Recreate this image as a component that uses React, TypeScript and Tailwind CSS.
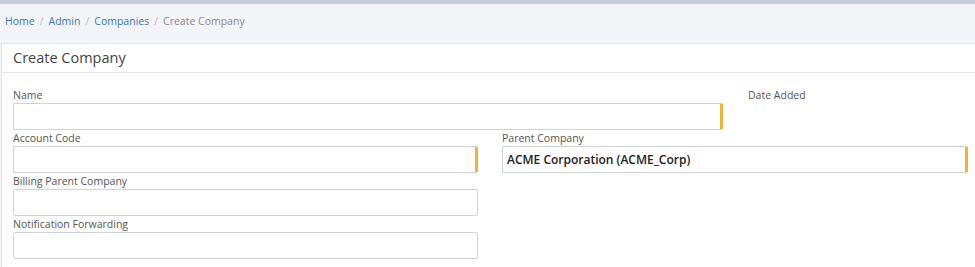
import React from "react";

const font = { fontFamily: '"Open Sans", "Noto Sans", sans-serif' };

function Field({
  label,
  value,
  required,
  className,
}: {
  label: string;
  value?: string;
  required?: boolean;
  className?: string;
}) {
  return (
    <div className={className}>
      <div className="h-[16px] text-[10.5px] leading-[16px] text-[#555]">{label}</div>
      <div
        className={`h-[27px] rounded-[2px] border border-[#cfd3d8] bg-white flex items-center px-[4px] text-[12px] font-semibold text-[#222] ${
          required ? "border-r-[3px] border-r-[#f4b433]" : ""
        }`}
      >
        {value}
      </div>
    </div>
  );
}

export default function App() {
  return (
    <div className="w-[975px] h-[267px] overflow-hidden bg-[#f3f4f8]" style={font}>
      <div className="h-[4px] bg-[#c4cde0]" />
      <div className="h-[39px] flex items-center px-[5px] text-[10.5px] pb-[10px] pt-[6px]">
        <span className="text-[#3d78b3]">Home</span>
        <span className="mx-[5px] text-[#bbb]">/</span>
        <span className="text-[#3d78b3]">Admin</span>
        <span className="mx-[5px] text-[#bbb]">/</span>
        <span className="text-[#3d78b3]">Companies</span>
        <span className="mx-[5px] text-[#bbb]">/</span>
        <span className="text-[#888]">Create Company</span>
      </div>
      <div className="ml-[1px] bg-white border-t border-l border-[#e1e5ea] h-[224px]">
        <div className="h-[29px] border-b border-[#e3e8e6] px-[11px] flex items-center text-[14.5px] text-[#444]">
          Create Company
        </div>
        <div className="pl-[11px] pt-[14px] flex flex-col">
          <div className="flex">
            <Field label="Name" required className="w-[710px]" />
            <div className="ml-[25px] text-[10.5px] leading-[16px] text-[#555]">Date Added</div>
          </div>
          <div className="flex">
            <Field label="Account Code" required className="w-[465px]" />
            <Field
              label="Parent Company"
              value="ACME Corporation (ACME_Corp)"
              required
              className="ml-[24px] w-[466px]"
            />
          </div>
          <Field label="Billing Parent Company" className="w-[465px]" />
          <Field label="Notification Forwarding" className="w-[465px]" />
        </div>
      </div>
    </div>
  );
}
